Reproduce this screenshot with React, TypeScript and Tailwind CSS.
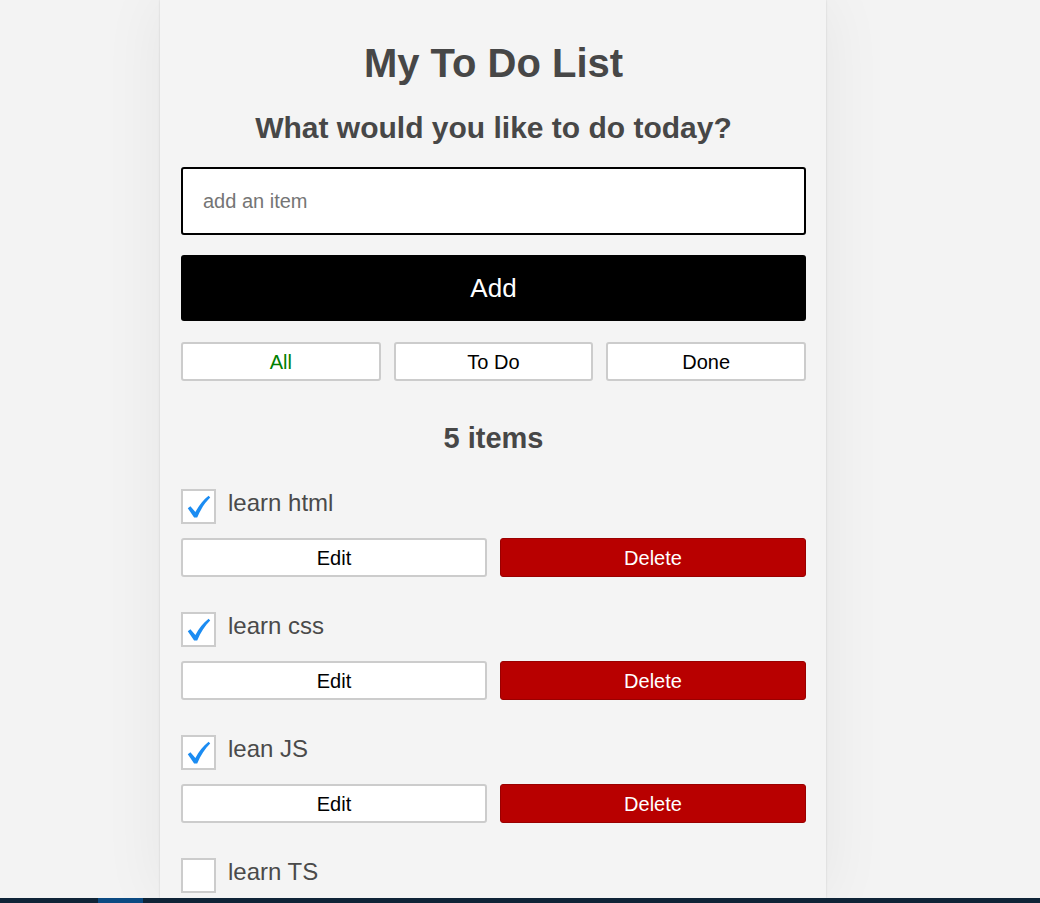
import { useState } from 'react';

type Todo = { id: number; text: string; done: boolean };

const initialTodos: Todo[] = [
  { id: 1, text: 'learn html', done: true },
  { id: 2, text: 'learn css', done: true },
  { id: 3, text: 'lean JS', done: true },
  { id: 4, text: 'learn TS', done: false },
  { id: 5, text: 'learn React', done: false },
];

function CheckMark() {
  return (
    <svg viewBox="0 0 24 24" className="w-[24px] h-[24px]" aria-hidden="true">
      <path
        d="M0.8 13.2 L3.4 11.2 L8.4 17 C11.9 10.6 16 5.1 21.6 0.8 L23.2 2.6 C18.2 7.6 13.7 14.1 10.2 22.6 L7.1 22.6 Z"
        fill="#1b8cf2"
      />
    </svg>
  );
}

function TodoItem({ todo, onToggle, onDelete }: { todo: Todo; onToggle: () => void; onDelete: () => void }) {
  return (
    <li className="flex flex-col gap-[14px] mb-[35px]">
      <div className="flex items-start gap-[12px]">
        <button
          onClick={onToggle}
          className="w-[35px] h-[35px] shrink-0 bg-white border-2 border-[#cccccc] flex items-center justify-center pl-[1px] pt-[1px]"
        >
          {todo.done && <CheckMark />}
        </button>
        <span className="mt-[2px] text-[24px] leading-[24px] text-[#4a4a4a]">{todo.text}</span>
      </div>
      <div className="grid grid-cols-2 gap-[13px]">
        <button className="h-[39px] bg-white border-2 border-[#cccccc] rounded-[3px] text-[20px] text-black">
          Edit
        </button>
        <button
          onClick={onDelete}
          className="h-[39px] bg-[#b80000] border border-[#9a0000] rounded-[3px] text-[20px] text-white"
        >
          Delete
        </button>
      </div>
    </li>
  );
}

export default function App() {
  const [todos, setTodos] = useState<Todo[]>(initialTodos);
  const [text, setText] = useState('');
  const [filter, setFilter] = useState<'all' | 'todo' | 'done'>('all');

  const addTodo = () => {
    if (!text.trim()) return;
    setTodos([...todos, { id: Date.now(), text: text.trim(), done: false }]);
    setText('');
  };

  const visible = todos.filter((t) => (filter === 'all' ? true : filter === 'done' ? t.done : !t.done));

  return (
    <div
      className="h-screen flex flex-col overflow-hidden bg-[#f3f3f3]"
      style={{ fontFamily: '"Liberation Sans", Arial, sans-serif' }}
    >
      <div className="flex-1 min-h-0">
        {/* Card */}
        <div className="ml-[160px] w-[666px] h-full overflow-hidden bg-[#f4f4f4] pl-[21px] pr-[20px] pt-[39px] shadow-[0_0_2px_rgba(0,0,0,0.14),0_0_60px_rgba(0,0,0,0.06)]">
          <h1 className="text-center font-bold text-[40px] leading-[48px] text-[#474747]">My To Do List</h1>
          <h2 className="mt-[23px] text-center font-bold text-[30px] leading-[36px] text-[#474747]">
            What would you like to do today?
          </h2>

          <input
            value={text}
            onChange={(e) => setText(e.target.value)}
            placeholder="add an item"
            className="mt-[21px] block w-full h-[68px] border-2 border-black rounded-[3px] bg-white px-[20px] text-[20px] text-black placeholder:text-[#757575] outline-none"
          />

          <button
            onClick={addTodo}
            className="mt-[20px] block w-full h-[66px] bg-black rounded-[3px] text-white text-[26px]"
          >
            Add
          </button>

          <div className="mt-[21px] grid grid-cols-3 gap-[13px]">
            <button
              onClick={() => setFilter('all')}
              className={`h-[39px] bg-white border-2 border-[#cccccc] rounded-[3px] text-[20px] ${filter === 'all' ? 'text-[#008000]' : 'text-black'}`}
            >
              All
            </button>
            <button
              onClick={() => setFilter('todo')}
              className={`h-[39px] bg-white border-2 border-[#cccccc] rounded-[3px] text-[20px] ${filter === 'todo' ? 'text-[#008000]' : 'text-black'}`}
            >
              To Do
            </button>
            <button
              onClick={() => setFilter('done')}
              className={`h-[39px] bg-white border-2 border-[#cccccc] rounded-[3px] text-[20px] ${filter === 'done' ? 'text-[#008000]' : 'text-black'}`}
            >
              Done
            </button>
          </div>

          <h2 className="mt-[40px] text-center font-bold text-[29px] leading-[34px] text-[#474747]">
            {visible.length} items
          </h2>

          <ul className="mt-[34px]">
            {visible.map((t) => (
              <TodoItem
                key={t.id}
                todo={t}
                onToggle={() => setTodos(todos.map((x) => (x.id === t.id ? { ...x, done: !x.done } : x)))}
                onDelete={() => setTodos(todos.filter((x) => x.id !== t.id))}
              />
            ))}
          </ul>
        </div>
      </div>

      {/* taskbar strip */}
      <div className="h-[5px] shrink-0 bg-[#0f2437] flex">
        <div className="ml-[98px] w-[45px] bg-[#0b4a82]" />
      </div>
    </div>
  );
}
